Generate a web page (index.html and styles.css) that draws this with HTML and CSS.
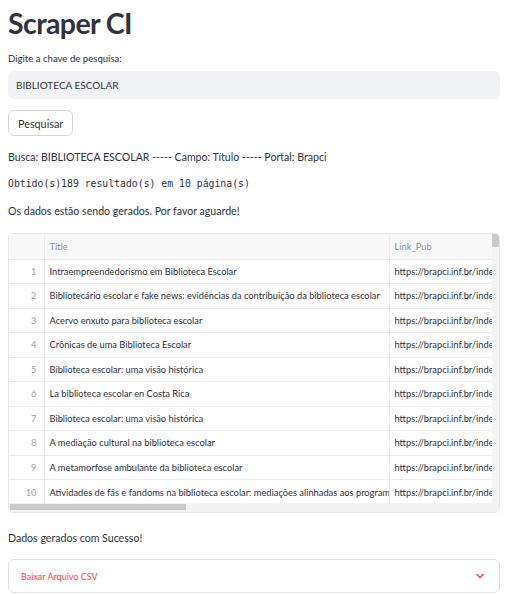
FILE: index.html
```html
<!DOCTYPE html>
<html lang="pt">
<head>
  <meta charset="UTF-8" />
  <title>Scraper CI</title>
  <link rel="stylesheet" href="styles.css">
</head>
<body>
  <div class="main">
    <h1>Scraper CI</h1>

    <label class="field-label" for="chave">Digite a chave de pesquisa:</label>
    <input class="text-input" id="chave" type="text" value="BIBLIOTECA ESCOLAR" />

    <button class="btn">Pesquisar</button>

    <p class="info">Busca: BIBLIOTECA ESCOLAR ----- Campo: Título ----- Portal: Brapci</p>
    <p class="mono">Obtido(s)189 resultado(s) em 10 página(s)</p>
    <p class="info">Os dados estão sendo gerados. Por favor aguarde!</p>

    <div class="df">
      <div class="df-view">
        <table>
          <thead>
            <tr><th class="idx"></th><th class="title">Title</th><th class="link">Link_Pub</th></tr>
          </thead>
          <tbody>
            <tr><td class="idx">1</td><td>Intraempreendedorismo em Biblioteca Escolar</td><td>https://brapci.inf.br/index.php</td></tr>
            <tr><td class="idx">2</td><td>Bibliotecário escolar e fake news: evidências da contribuição da biblioteca escolar</td><td>https://brapci.inf.br/index.php</td></tr>
            <tr><td class="idx">3</td><td>Acervo enxuto para biblioteca escolar</td><td>https://brapci.inf.br/index.php</td></tr>
            <tr><td class="idx">4</td><td>Crônicas de uma Biblioteca Escolar</td><td>https://brapci.inf.br/index.php</td></tr>
            <tr><td class="idx">5</td><td>Biblioteca escolar: uma visão histórica</td><td>https://brapci.inf.br/index.php</td></tr>
            <tr><td class="idx">6</td><td>La biblioteca escolar en Costa Rica</td><td>https://brapci.inf.br/index.php</td></tr>
            <tr><td class="idx">7</td><td>Biblioteca escolar: uma visão histórica</td><td>https://brapci.inf.br/index.php</td></tr>
            <tr><td class="idx">8</td><td>A mediação cultural na biblioteca escolar</td><td>https://brapci.inf.br/index.php</td></tr>
            <tr><td class="idx">9</td><td>A metamorfose ambulante da biblioteca escolar</td><td>https://brapci.inf.br/index.php</td></tr>
            <tr><td class="idx">10</td><td>Atividades de fãs e fandoms na biblioteca escolar: mediações alinhadas aos programas</td><td>https://brapci.inf.br/index.php</td></tr>
          </tbody>
        </table>
      </div>
      <div class="vbar"><div class="vthumb"></div></div>
      <div class="hbar"><div class="hthumb"></div></div>
      <div class="corner"></div>
    </div>

    <p class="info success">Dados gerados com Sucesso!</p>

    <div class="expander">
      <span>Baixar Arquivo CSV</span>
      <svg width="10" height="10" viewBox="0 0 10 10">
        <path d="M2 3.5 L5 6.5 L8 3.5" fill="none" stroke="#ff4b4b" stroke-width="1.6" stroke-linecap="round" stroke-linejoin="round"/>
      </svg>
    </div>
  </div>
</body>
</html>
```

FILE: styles.css
```css
body {
  margin: 0;
  background: #ffffff;
  color: #31333f;
  font-family: Lato, "Noto Sans", sans-serif;
}

.main {
  padding: 0 14px 0 8px;
}

h1 {
  margin: 0;
  padding-top: 1px;
  font-size: 28.5px;
  font-weight: 700;
  line-height: 44px;
  letter-spacing: -0.6px;
}

.field-label {
  display: block;
  margin-top: 6px;
  font-size: 9.6px;
  line-height: 15px;
}

.text-input {
  display: block;
  box-sizing: border-box;
  width: 100%;
  height: 28px;
  margin-top: 5px;
  padding: 0 8px;
  border: none;
  border-radius: 6px;
  background: #f0f2f6;
  color: #31333f;
  font-family: inherit;
  font-size: 10px;
}

.btn {
  display: block;
  margin-top: 11px;
  height: 26px;
  padding: 0 9px;
  border: 1px solid #d6d6d9;
  border-radius: 6px;
  background: #ffffff;
  color: #31333f;
  font-family: inherit;
  font-size: 10.8px;
}

.info {
  margin: 0;
  font-size: 10.6px;
  line-height: 16px;
}

.btn + .info {
  margin-top: 13px;
}

.mono {
  margin: 11px 0;
  font-family: "DejaVu Sans Mono", monospace;
  font-size: 9.8px;
  line-height: 16px;
}

.df {
  margin-top: 14px;
  height: 280px;
  box-sizing: border-box;
  border: 1px solid #e8e8ea;
  border-radius: 5px;
  overflow: hidden;
  display: grid;
  grid-template-columns: 1fr 7px;
  grid-template-rows: 1fr 9px;
  background: #f4f4f5;
}

.df-view {
  overflow: hidden;
  background: #ffffff;
}

table {
  border-collapse: collapse;
  table-layout: fixed;
  width: 520px;
  font-size: 9.3px;
}

th, td {
  height: 24.5px;
  padding: 0 5px;
  white-space: nowrap;
  overflow: hidden;
  text-align: left;
  border-bottom: 1px solid #ececee;
  border-right: 1px solid #ececee;
  box-sizing: border-box;
}

th {
  height: 25px;
  background: #f8f8f9;
  color: #8d909a;
  font-weight: 400;
}

th.idx, td.idx {
  width: 35px;
  text-align: right;
  padding-right: 7px;
  color: #a1a4ad;
}

th.title {
  width: 345px;
}

td {
  color: #31333f;
}

tbody tr:last-child td {
  border-bottom: none;
}

.vbar {
  background: #f4f4f5;
}

.vthumb {
  height: 13px;
  background: #c9c9cc;
  border-radius: 1px;
}

.hbar {
  padding-top: 1px;
  background: #f4f4f5;
}

.hthumb {
  width: 176px;
  height: 6px;
  margin-left: 1px;
  background: #c9c9cc;
}

.success {
  margin-top: 17px;
}

.expander {
  margin-top: 13px;
  height: 34px;
  box-sizing: border-box;
  border: 1px solid #e0e0e3;
  border-radius: 6px;
  padding: 0 14px 0 12px;
  display: flex;
  align-items: center;
  justify-content: space-between;
  color: #ff4b4b;
  font-size: 9px;
}
```
